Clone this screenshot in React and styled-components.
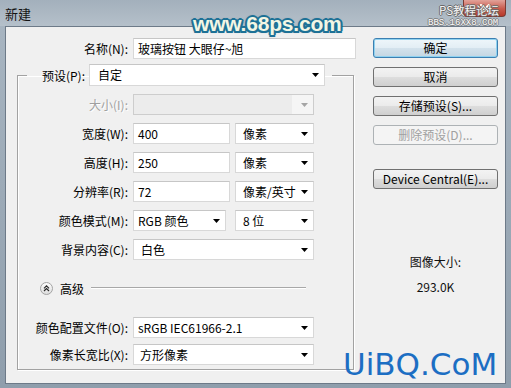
import React from 'react';
import styled, { createGlobalStyle, css } from 'styled-components';

const UI_FONT = `"Noto Sans CJK SC", "Noto Sans", sans-serif`;

const GlobalStyle = createGlobalStyle`
  html, body {
    margin: 0;
    padding: 0;
    background: #fff;
  }
  body {
    font-family: ${UI_FONT};
    font-size: 12px;
    color: #000;
  }
`;

const Arrow = ({ color = '#000' }) => (
  <svg width="7" height="4" viewBox="0 0 7 4">
    <path d="M0 0h7L3.5 4z" fill={color} />
  </svg>
);

const AdvancedIcon = () => (
  <svg width="13" height="13" viewBox="0 0 13 13">
    <defs>
      <linearGradient id="advBg" x1="0" y1="0" x2="0" y2="1">
        <stop offset="0" stopColor="#ffffff" />
        <stop offset="1" stopColor="#dcdcdc" />
      </linearGradient>
    </defs>
    <circle cx="6.5" cy="6.5" r="6" fill="url(#advBg)" stroke="#a3a3a3" />
    <path
      d="M4 6.3L6.5 3.8L9 6.3M4 9L6.5 6.5L9 9"
      fill="none"
      stroke="#2a2a2a"
      strokeWidth="1.2"
    />
  </svg>
);

const CloseGlyph = () => (
  <svg width="10" height="9" viewBox="0 0 10 9">
    <path d="M1 1L9 8M9 1L1 8" stroke="#fff" strokeWidth="2.2" strokeLinecap="round" />
  </svg>
);

const Window = styled.div`
  position: relative;
  width: 511px;
  height: 388px;
  box-sizing: border-box;
  padding: 0 5px 4px;
  display: flex;
  flex-direction: column;
  background: linear-gradient(#a9b6c2, #8f9eac);
  overflow: hidden;
`;

const TitleBar = styled.div`
  height: 26px;
  display: flex;
  align-items: center;
  font-size: 13px;
  color: #141414;
  background: linear-gradient(#a3b0bc, #b5c0ca);
  margin: 0 -5px;
  padding: 0 5px;
`;

const Client = styled.div`
  flex: 1;
  display: flex;
  align-items: flex-start;
  border: 1px solid #6d7a88;
  background: #f0f0f0;
  padding-top: 11px;
`;

const Main = styled.div`
  width: 339px;
  padding-left: 11px;
  display: flex;
  flex-direction: column;
`;

const NameRow = styled.div`
  display: grid;
  grid-template-columns: 111px 223px;
  column-gap: 5px;
`;

const Label = styled.div`
  text-align: right;
  white-space: nowrap;
  line-height: 21px;
  height: 21px;
  color: ${(p) => (p.$disabled ? '#a0a0a0' : '#000')};
  text-shadow: ${(p) => (p.$disabled ? '1px 1px 0 #fff' : 'none')};
  width: ${(p) => (p.$w ? `${p.$w}px` : 'auto')};
`;

const Box = styled.div`
  box-sizing: border-box;
  height: ${(p) => p.$h || 21}px;
  width: ${(p) => p.$w}px;
  background: #fff;
  border: 1px solid #d8d8d8;
  border-top-color: #c6c6c6;
  padding: 0 5px 0 ${(p) => (p.$pad != null ? p.$pad : 4)}px;
  line-height: ${(p) => (p.$h || 21) - 2}px;
  white-space: nowrap;
  display: flex;
  align-items: center;
  justify-content: space-between;
  ${(p) =>
    p.$disabled &&
    css`
      background: linear-gradient(to right, #ececec 88%, #f5f5f5 88%);
      border-color: #cdcdcd;
    `}
`;

const Group = styled.fieldset`
  margin: 5px 0 0;
  padding: 0 0 4px 0;
  width: 337px;
  box-sizing: border-box;
  min-width: 0;
  border: 1px solid #a2a2a2;
  box-shadow: 1px 1px 0 #fff, inset 1px 1px 0 #fff;
`;

const Legend = styled.legend`
  margin-left: 9px;
  padding: 0 7px 0 0;
  display: flex;
  align-items: center;
  column-gap: 4px;
`;

const Rows = styled.div`
  margin-top: ${(p) => p.$top}px;
  display: grid;
  grid-template-columns: 110px 181px;
  column-gap: 5px;
  row-gap: ${(p) => p.$gap}px;
`;

const Pair = styled.div`
  display: flex;
  justify-content: space-between;
`;

const Advanced = styled.div`
  margin: 22px 0 0 22px;
  height: 13px;
  display: flex;
  align-items: center;
  column-gap: 7px;
  line-height: 13px;
`;

const Rule = styled.div`
  width: 215px;
  height: 1px;
  background: #a8a8a8;
  box-shadow: 0 1px 0 #fff;
  margin-top: -3px;
`;

const Side = styled.div`
  width: 125px;
  margin-left: 17px;
  display: flex;
  flex-direction: column;
  align-items: stretch;
`;

const Button = styled.div`
  box-sizing: border-box;
  height: 20px;
  margin-top: ${(p) => p.$top || 0}px;
  border: 1px solid #707070;
  border-radius: 3px;
  background: linear-gradient(#f3f3f3 0%, #ebebeb 48%, #dddddd 52%, #cfcfcf 100%);
  text-align: center;
  line-height: 18px;
  white-space: nowrap;
  color: #000;
  ${(p) =>
    p.$primary &&
    css`
      border-color: #3c7fb1;
      box-shadow: inset 0 0 0 1px #8fd2f0;
      background: linear-gradient(#eef6fa 0%, #e3eef5 48%, #d3e2ec 52%, #c4d6e2 100%);
    `}
  ${(p) =>
    p.$disabled &&
    css`
      border-color: #adb2b5;
      background: #f4f4f4;
      color: #a0a0a0;
    `}
`;

const Info = styled.div`
  margin-top: ${(p) => p.$top}px;
  text-align: center;
  line-height: 16px;
  color: #111;
`;

const SiteMark = styled.div`
  position: absolute;
  left: 193px;
  top: 13px;
  font-family: "Liberation Sans", Arial, sans-serif;
  font-weight: bold;
  font-size: 21px;
  line-height: 21px;
  letter-spacing: -0.2px;
  color: #f3f6e4;
  text-shadow: 2px 0 0 #1d7196, -2px 0 0 #1d7196, 0 2px 0 #1d7196, 0 -2px 0 #1d7196,
    1.5px 1.5px 0 #1d7196, -1.5px 1.5px 0 #1d7196, 1.5px -1.5px 0 #1d7196,
    -1.5px -1.5px 0 #1d7196, 0 0 3px #0d4a66;
`;

const CloseButton = styled.div`
  position: absolute;
  right: 5px;
  top: 0;
  width: 43px;
  height: 17px;
  box-sizing: border-box;
  border: 1px solid #7a3a33;
  border-top: none;
  border-radius: 0 0 4px 4px;
  background: linear-gradient(#e2a299, #c85a4c 55%, #b8392b);
  display: flex;
  align-items: center;
  justify-content: center;
`;

const ForumMark = styled.div`
  position: absolute;
  right: 12px;
  top: 3px;
  font-family: ${UI_FONT};
  font-size: 11.5px;
  line-height: 14px;
  color: #f6f6f6;
  text-shadow: 1px 0 0 #6a6a6a, -1px 0 0 #6a6a6a, 0 1px 0 #6a6a6a, 0 -1px 0 #6a6a6a;
`;

const ForumUrl = styled.div`
  position: absolute;
  left: 428px;
  top: 19px;
  font-family: "Liberation Mono", monospace;
  font-size: 9px;
  line-height: 9px;
  color: #fbfbfb;
  text-shadow: 1px 0 0 #7d7d7d, -1px 0 0 #7d7d7d, 0 1px 0 #7d7d7d, 0 -1px 0 #7d7d7d;
`;

const CornerMark = styled.div`
  position: absolute;
  left: 343px;
  top: 349px;
  font-family: "DejaVu Sans", sans-serif;
  font-size: 31px;
  line-height: 31px;
  color: #1c6ec3;
`;

const Select = ({ w, pad, disabled, children }) => (
  <Box $w={w} $pad={pad} $disabled={disabled}>
    <span>{children}</span>
    <Arrow color={disabled ? '#a5a5a5' : '#000'} />
  </Box>
);

export default function App() {
  return (
    <>
      <GlobalStyle />
      <Window>
        <TitleBar>新建</TitleBar>
        <Client>
          <Main>
            <NameRow>
              <Label>名称(N):</Label>
              <Box $w={223}>玻璃按钮 大眼仔~旭</Box>
            </NameRow>
            <Group>
              <Legend>
                <Label $w={58}>预设(P):</Label>
                <Box $w={236} $h={22} $pad={8}>
                  <span>自定</span>
                  <Arrow />
                </Box>
              </Legend>
              <Rows $top={8} $gap={8}>
                <Label $disabled>大小(I):</Label>
                <Select w={181} disabled />
                <Label>宽度(W):</Label>
                <Pair>
                  <Box $w={97}>400</Box>
                  <Select w={79} pad={7}>像素</Select>
                </Pair>
                <Label>高度(H):</Label>
                <Pair>
                  <Box $w={97}>250</Box>
                  <Select w={79} pad={7}>像素</Select>
                </Pair>
                <Label>分辨率(R):</Label>
                <Pair>
                  <Box $w={97}>72</Box>
                  <Select w={79} pad={7}>像素/英寸</Select>
                </Pair>
                <Label>颜色模式(M):</Label>
                <Pair>
                  <Select w={93}>RGB 颜色</Select>
                  <Select w={79} pad={7}>8 位</Select>
                </Pair>
                <Label>背景内容(C):</Label>
                <Select w={181} pad={7}>白色</Select>
              </Rows>
              <Advanced>
                <AdvancedIcon />
                <span>高级</span>
                <Rule />
              </Advanced>
              <Rows $top={22} $gap={6}>
                <Label>颜色配置文件(O):</Label>
                <Select w={181}>sRGB IEC61966-2.1</Select>
                <Label>像素长宽比(X):</Label>
                <Select w={181} pad={6}>方形像素</Select>
              </Rows>
            </Group>
          </Main>
          <Side>
            <Button $primary>确定</Button>
            <Button $top={9}>取消</Button>
            <Button $top={9}>存储预设(S)...</Button>
            <Button $top={9} $disabled>删除预设(D)...</Button>
            <Button $top={24}>Device Central(E)...</Button>
            <Info $top={65}>图像大小:</Info>
            <Info $top={9}>293.0K</Info>
          </Side>
        </Client>
        <CloseButton>
          <CloseGlyph />
        </CloseButton>
        <ForumMark>PS教程论坛</ForumMark>
        <ForumUrl>BBS.16XX8.COM</ForumUrl>
        <SiteMark>www.68ps.com</SiteMark>
        <CornerMark>UiBQ.CoM</CornerMark>
      </Window>
    </>
  );
}
